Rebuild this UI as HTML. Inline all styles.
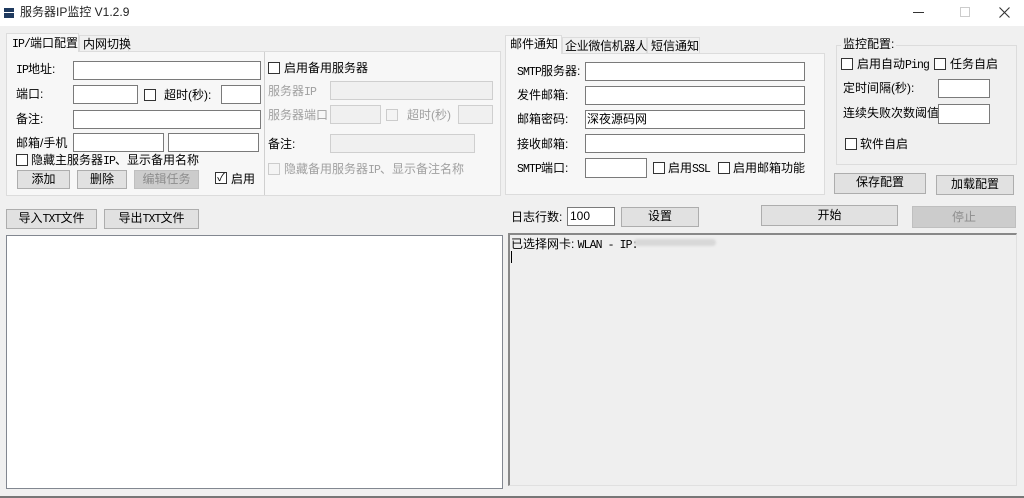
<!DOCTYPE html>
<html><head><meta charset="utf-8"><style>
*{box-sizing:border-box;margin:0;padding:0}
body{width:1024px;height:498px;background:#f0f0f0;position:relative;overflow:hidden;font-family:"Liberation Sans","Noto Sans CJK SC",sans-serif;font-size:12px;color:#000}
.a{position:absolute}
.t{position:absolute;white-space:nowrap;line-height:14px}
.m{font-family:"Liberation Mono",monospace;font-size:11.5px;letter-spacing:-0.9px}
.in{position:absolute;background:#fff;border:1px solid #7a7a7a}
.din{position:absolute;background:#f0f0f0;border:1px solid #cfcfcf}
.cb{position:absolute;width:12px;height:12px;border:1px solid #333;background:#fff}
.dcb{position:absolute;width:12px;height:12px;border:1px solid #ccc;background:#f4f4f4}
.btn{position:absolute;background:#e1e1e1;border:1px solid #adadad;text-align:center;line-height:17px}
.dbtn{position:absolute;background:#cccccc;border:1px solid #bfbfbf;color:#8d8d8d;text-align:center;line-height:17px}
.g{color:#a0a0a0}
</style></head><body>
<div class="a" style="left:0;top:0;width:1024px;height:26px;background:#fff"></div>
<div class="a" style="left:4px;top:8px;width:10px;height:4px;background:#1f3a5f"></div>
<div class="a" style="left:4px;top:13px;width:10px;height:5px;background:#1f3a5f"></div>
<div class="t" style="left:20px;top:5px;color:#222">服务器IP监控 V1.2.9</div>
<div class="a" style="left:913px;top:12px;width:11px;height:1px;background:#333"></div>
<div class="a" style="left:960px;top:7px;width:10px;height:10px;border:1px solid #ccc"></div>
<svg class="a" style="left:999px;top:7px" width="11" height="11"><path d="M0.5 0.5L10.5 10.5M10.5 0.5L0.5 10.5" stroke="#333" stroke-width="1.1"/></svg>

<!-- left tab -->
<div class="a" style="left:6px;top:51px;width:495px;height:145px;background:#f7f7f7;border:1px solid #dcdcdc"></div>
<div class="a" style="left:6px;top:33px;width:73px;height:19px;background:#f7f7f7;border:1px solid #dcdcdc;border-bottom:none"></div>
<div class="a" style="left:79px;top:35px;width:50px;height:16px;background:#f0f0f0;border:1px solid #dcdcdc;border-bottom:none"></div>
<div class="t" style="left:12px;top:36px"><span class="m">IP/</span>端口配置</div>
<div class="t" style="left:83px;top:37px">内网切换</div>
<div class="a" style="left:264px;top:52px;width:1px;height:143px;background:#d0d0d0"></div>

<div class="t" style="left:16px;top:62px"><span class="m">IP</span>地址:</div>
<div class="in" style="left:73px;top:61px;width:188px;height:19px"></div>
<div class="t" style="left:16px;top:87px">端口:</div>
<div class="in" style="left:73px;top:85px;width:65px;height:19px"></div>
<div class="cb" style="left:144px;top:89px"></div>
<div class="t" style="left:164px;top:88px">超时(秒):</div>
<div class="in" style="left:221px;top:85px;width:40px;height:19px"></div>
<div class="t" style="left:16px;top:112px">备注:</div>
<div class="in" style="left:73px;top:110px;width:188px;height:19px"></div>
<div class="t" style="left:16px;top:136px">邮箱/手机</div>
<div class="in" style="left:73px;top:133px;width:91px;height:19px"></div>
<div class="in" style="left:168px;top:133px;width:91px;height:19px"></div>
<div class="cb" style="left:16px;top:154px"></div>
<div class="t" style="left:31px;top:153px">隐藏主服务器<span class="m">IP</span>、显示备用名称</div>
<div class="btn" style="left:17px;top:170px;width:53px;height:19px">添加</div>
<div class="btn" style="left:77px;top:170px;width:50px;height:19px">删除</div>
<div class="dbtn" style="left:134px;top:170px;width:65px;height:19px">编辑任务</div>
<div class="cb" style="left:215px;top:172px;font-size:11px;line-height:10px;text-align:center">✓</div>
<div class="t" style="left:231px;top:172px">启用</div>

<div class="cb" style="left:268px;top:62px"></div>
<div class="t" style="left:284px;top:61px">启用备用服务器</div>
<div class="t g" style="left:268px;top:84px">服务器<span class="m">IP</span></div>
<div class="din" style="left:330px;top:81px;width:163px;height:19px"></div>
<div class="t g" style="left:268px;top:108px">服务器端口</div>
<div class="din" style="left:330px;top:105px;width:51px;height:19px"></div>
<div class="dcb" style="left:386px;top:109px"></div>
<div class="t g" style="left:407px;top:108px">超时(秒)</div>
<div class="din" style="left:458px;top:105px;width:35px;height:19px"></div>
<div class="t" style="left:268px;top:137px">备注:</div>
<div class="din" style="left:330px;top:134px;width:145px;height:19px"></div>
<div class="dcb" style="left:268px;top:163px"></div>
<div class="t g" style="left:284px;top:162px">隐藏备用服务器<span class="m">IP</span>、显示备注名称</div>

<div class="btn" style="left:6px;top:209px;width:91px;height:20px">导入<span class="m">TXT</span>文件</div>
<div class="btn" style="left:104px;top:209px;width:95px;height:20px">导出<span class="m">TXT</span>文件</div>
<div class="a" style="left:6px;top:235px;width:497px;height:254px;background:#fff;border:1px solid #828790"></div>

<!-- right tab -->
<div class="a" style="left:505px;top:53px;width:320px;height:142px;background:#f7f7f7;border:1px solid #dcdcdc"></div>
<div class="a" style="left:505px;top:35px;width:57px;height:19px;background:#f7f7f7;border:1px solid #dcdcdc;border-bottom:none"></div>
<div class="a" style="left:562px;top:37px;width:85px;height:16px;background:#f0f0f0;border:1px solid #dcdcdc;border-bottom:none"></div>
<div class="a" style="left:647px;top:37px;width:53px;height:16px;background:#f0f0f0;border:1px solid #dcdcdc;border-bottom:none"></div>
<div class="t" style="left:510px;top:37px">邮件通知</div>
<div class="t" style="left:565px;top:39px;letter-spacing:-0.3px">企业微信机器人</div>
<div class="t" style="left:651px;top:39px">短信通知</div>
<div class="t" style="left:517px;top:64px"><span class="m">SMTP</span>服务器:</div>
<div class="in" style="left:585px;top:62px;width:220px;height:19px"></div>
<div class="t" style="left:517px;top:88px">发件邮箱:</div>
<div class="in" style="left:585px;top:86px;width:220px;height:19px"></div>
<div class="t" style="left:517px;top:112px">邮箱密码:</div>
<div class="in" style="left:585px;top:110px;width:220px;height:19px;padding-left:1px;line-height:16px">深夜源码网</div>
<div class="t" style="left:517px;top:137px">接收邮箱:</div>
<div class="in" style="left:585px;top:134px;width:220px;height:19px"></div>
<div class="t" style="left:517px;top:161px"><span class="m">SMTP</span>端口:</div>
<div class="in" style="left:585px;top:158px;width:62px;height:20px"></div>
<div class="cb" style="left:653px;top:162px"></div>
<div class="t" style="left:668px;top:161px">启用<span class="m">SSL</span></div>
<div class="cb" style="left:718px;top:162px"></div>
<div class="t" style="left:733px;top:161px">启用邮箱功能</div>

<div class="a" style="left:836px;top:45px;width:181px;height:120px;border:1px solid #dcdcdc"></div>
<div class="t" style="left:841px;top:37px;background:#f0f0f0;padding:0 2px">监控配置:</div>
<div class="cb" style="left:841px;top:58px"></div>
<div class="t" style="left:857px;top:57px">启用自动<span class="m">Ping</span></div>
<div class="cb" style="left:934px;top:58px"></div>
<div class="t" style="left:950px;top:57px">任务自启</div>
<div class="t" style="left:843px;top:81px">定时间隔(秒):</div>
<div class="in" style="left:938px;top:79px;width:52px;height:19px"></div>
<div class="t" style="left:843px;top:106px">连续失败次数阈值</div>
<div class="in" style="left:938px;top:104px;width:52px;height:20px"></div>
<div class="cb" style="left:845px;top:138px"></div>
<div class="t" style="left:860px;top:137px">软件自启</div>
<div class="btn" style="left:834px;top:173px;width:92px;height:21px">保存配置</div>
<div class="btn" style="left:936px;top:175px;width:78px;height:20px">加载配置</div>

<div class="t" style="left:511px;top:210px">日志行数:</div>
<div class="in" style="left:567px;top:207px;width:48px;height:19px;padding-left:2px;line-height:16px">100</div>
<div class="btn" style="left:621px;top:207px;width:78px;height:20px">设置</div>
<div class="btn" style="left:761px;top:205px;width:137px;height:21px;line-height:18px">开始</div>
<div class="dbtn" style="left:912px;top:206px;width:104px;height:22px;line-height:20px">停止</div>
<div class="a" style="left:508px;top:233px;width:509px;height:253px;background:#efefef;border:1px solid #e0e0e0;border-left:2px solid #888;border-top:2px solid #888"></div>
<div class="t" style="left:511px;top:237px">已选择网卡: <span class="m">WLAN - IP:</span></div>
<div class="a" style="left:634px;top:239px;width:82px;height:7px;background:#d8d8d8;border-radius:4px;filter:blur(1px)"></div>
<div class="a" style="left:511px;top:251px;width:1px;height:12px;background:#000"></div>
<div class="a" style="left:0;top:496px;width:1024px;height:2px;background:#777"></div>
</body></html>
